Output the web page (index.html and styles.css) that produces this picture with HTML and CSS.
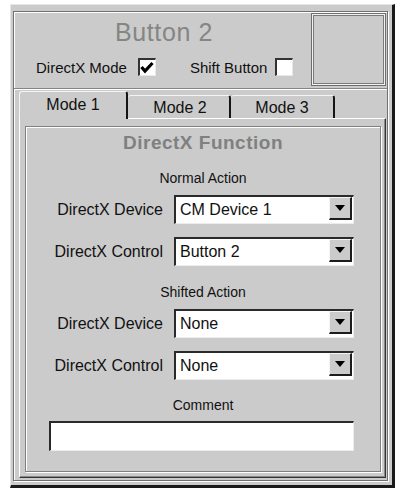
FILE: index.html
```html
<!DOCTYPE html>
<html lang="en">
<head>
<meta charset="utf-8">
<title>Button 2</title>
<link rel="stylesheet" href="styles.css">
</head>
<body>

<div class="window">
  <div class="frame">

    <div class="header">
      <div class="header-main">
        <div class="title">Button 2</div>
        <div class="checks">
          <span class="check-label">DirectX Mode</span>
          <span class="checkbox">
            <svg width="14" height="14" viewBox="0 0 14 14"><polyline points="1.5,6 5,10 12.5,2" fill="none" stroke="#000" stroke-width="3.2"/></svg>
          </span>
          <span class="check-label shift">Shift Button</span>
          <span class="checkbox"></span>
        </div>
      </div>
      <div class="preview"></div>
    </div>

    <div class="tabs">
      <div class="tab active">Mode 1</div>
      <div class="tab tab2">Mode 2</div>
      <div class="tab tab3">Mode 3</div>
    </div>

    <div class="panel">
      <div class="group">
        <div class="group-title">DirectX Function</div>

        <div class="caption normal">Normal Action</div>
        <div class="row first">
          <span class="label">DirectX Device</span>
          <div class="combo"><span class="value">CM Device 1</span><span class="drop"><span class="arrow"></span></span></div>
        </div>
        <div class="row">
          <span class="label">DirectX Control</span>
          <div class="combo"><span class="value">Button 2</span><span class="drop"><span class="arrow"></span></span></div>
        </div>

        <div class="caption shifted">Shifted Action</div>
        <div class="row first">
          <span class="label">DirectX Device</span>
          <div class="combo"><span class="value">None</span><span class="drop"><span class="arrow"></span></span></div>
        </div>
        <div class="row">
          <span class="label">DirectX Control</span>
          <div class="combo"><span class="value">None</span><span class="drop"><span class="arrow"></span></span></div>
        </div>

        <div class="caption comment">Comment</div>
        <div class="edit"></div>
      </div>
    </div>

  </div>
</div>

</body>
</html>
```

FILE: styles.css
```css
body {
margin: 0;
background: #ffffff;
font-family: "Liberation Sans", Arial, sans-serif;
color: #111111;
}

.window {
margin: 4px 0 0 10px;
width: 385px;
height: 484px;
box-sizing: border-box;
background: #cbcbcb;
border-top: 1px solid #e6e6e6;
border-left: 1px solid #e6e6e6;
border-right: 3px solid #1a1a1a;
border-bottom: 3px solid #1a1a1a;
padding: 6px 4px 4px 2px;
}

.frame {
height: 100%;
box-sizing: border-box;
border: 1px solid #707070;
box-shadow: inset 1px 1px 0 #ffffff, 1px 1px 0 #ffffff;
display: flex;
flex-direction: column;
}

/* top section */

.header {
height: 77px;
box-sizing: border-box;
display: flex;
border-bottom: 1px solid #858585;
box-shadow: 0 1px 0 #ffffff;
}

.header-main {
flex: 1;
display: flex;
flex-direction: column;
}

.title {
margin-top: 5px;
padding-left: 3px;
text-align: center;
font-size: 25px;
line-height: 30px;
letter-spacing: 0.6px;
color: #858585;
}

.checks {
margin-top: 10px;
height: 20px;
padding-left: 22px;
display: flex;
align-items: center;
font-size: 15px;
}

.checkbox {
margin-left: 11px;
width: 18px;
height: 18px;
box-sizing: border-box;
background: #ffffff;
border-top: 2px solid #333333;
border-left: 2px solid #333333;
border-right: 1px solid #e8e8e8;
border-bottom: 1px solid #e8e8e8;
display: flex;
align-items: center;
justify-content: center;
}

.check-label.shift {
margin-left: 34px;
}

.check-label.shift + .checkbox {
margin-left: 8px;
}

.preview {
width: 75px;
height: 73px;
box-sizing: border-box;
margin: 1px 1px 0 0;
border: 1px solid #6e6e6e;
box-shadow: inset 0 0 0 1px #f2f2f2, inset 0 0 0 2px #7a7a7a;
}

/* tabs */

.tabs {
height: 29px;
padding-left: 5px;
display: flex;
align-items: flex-end;
font-size: 16px;
position: relative;
z-index: 1;
}

.tab {
height: 23px;
box-sizing: border-box;
border-top: 1px solid #f4f4f4;
border-right: 2px solid #151515;
border-radius: 3px 3px 0 0;
text-align: center;
line-height: 21px;
padding-top: 1px;
}

.tab.active {
width: 109px;
height: 28px;
margin-bottom: -1px;
border-left: 1px solid #f4f4f4;
background: #cbcbcb;
line-height: 24px;
}

.tab2 {
width: 103px;
padding-left: 3px;
}

.tab3 {
width: 104px;
}

/* panel */

.panel {
flex: 1;
margin: 0 1px 2px 5px;
border-top: 1px solid #ffffff;
border-left: 1px solid #ffffff;
border-right: 1px solid #333333;
border-bottom: 1px solid #333333;
box-shadow: inset -1px -1px 0 #8a8a8a;
display: flex;
}

.group {
flex: 1;
margin: 7px 4px 5px 5px;
border: 1px solid #808080;
box-shadow: inset 1px 1px 0 #ffffff, 1px 1px 0 #ffffff;
display: flex;
flex-direction: column;
}

.group-title {
margin-top: 4px;
text-align: center;
font-size: 19px;
font-weight: bold;
line-height: 24px;
letter-spacing: 0.5px;
color: #808080;
}

.caption {
text-align: center;
font-size: 14px;
line-height: 18px;
}

.caption.normal {
margin-top: 14px;
}

.caption.shifted {
margin-top: 17px;
}

.caption.comment {
margin-top: 16px;
}

.row {
margin-top: 13px;
display: flex;
align-items: center;
}

.row.first {
margin-top: 8px;
}

.label {
width: 137px;
text-align: right;
font-size: 16px;
}

.combo {
margin-left: 11px;
width: 180px;
height: 29px;
box-sizing: border-box;
background: #ffffff;
border-top: 2px solid #2a2a2a;
border-left: 2px solid #2a2a2a;
border-right: 1px solid #ececec;
border-bottom: 1px solid #ececec;
display: flex;
align-items: stretch;
}

.value {
flex: 1;
padding-left: 4px;
font-size: 16px;
line-height: 26px;
}

.drop {
width: 23px;
margin: 0 1px 3px 0;
box-sizing: border-box;
background: #cbcbcb;
border-top: 1px solid #f4f4f4;
border-left: 1px solid #f4f4f4;
border-right: 2px solid #1c1c1c;
border-bottom: 2px solid #1c1c1c;
display: flex;
align-items: center;
justify-content: center;
}

.arrow {
width: 0;
height: 0;
border-left: 5px solid transparent;
border-right: 5px solid transparent;
border-top: 6px solid #000000;
}

.edit {
margin: 7px 0 0 23px;
width: 305px;
height: 30px;
box-sizing: border-box;
background: #ffffff;
border-top: 2px solid #2a2a2a;
border-left: 2px solid #2a2a2a;
border-right: 1px solid #ececec;
border-bottom: 1px solid #ececec;
}
```
